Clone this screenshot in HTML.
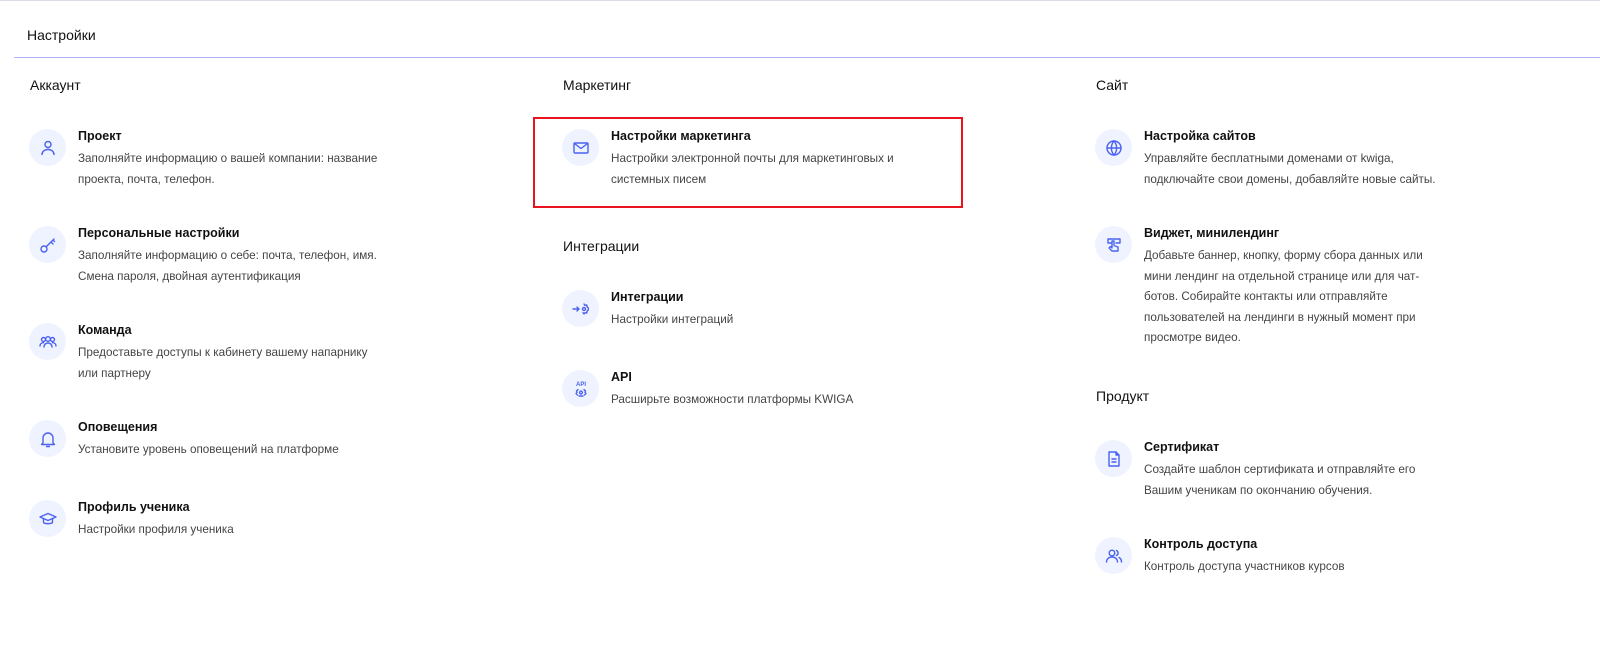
<!DOCTYPE html>
<html><head><meta charset="utf-8"><style>
*{margin:0;padding:0;box-sizing:border-box}
body{width:1600px;height:645px;background:#fff;font-family:"Liberation Sans",Arial,sans-serif;color:#111;position:relative;overflow:hidden}
.top{position:absolute;left:0;top:0;width:1600px;height:1px;background:#dcdce6}
.h1{position:absolute;left:27px;top:27px;font-size:14px}
.line{position:absolute;left:14px;right:0;top:57px;height:1px;background:#aab4ee}
.sec{position:absolute;font-size:14px}
.it{position:absolute;width:400px}
.ic{position:absolute;left:0;top:0;width:37px;height:37px;border-radius:50%;background:#eff3ff;display:flex;align-items:center;justify-content:center}
.ic svg{width:20px;height:20px;fill:none;stroke:#4a62ee;stroke-width:1.4;stroke-linecap:round;stroke-linejoin:round}
.t{position:absolute;left:49px;top:0;font-size:12.5px;font-weight:bold;white-space:nowrap}
.d{position:absolute;left:49px;top:20px;font-size:11.7px;line-height:20.5px;color:#444;width:306px}
.s .d{width:296px}
.box{position:absolute;left:533px;top:117px;width:430px;height:91px;border:2px solid #e8141e}
</style></head><body>
<div class="top"></div>
<div class="h1">Настройки</div>
<div class="line"></div>

<div class="sec" style="left:30px;top:77px">Аккаунт</div>
<div class="sec" style="left:563px;top:77px">Маркетинг</div>
<div class="sec" style="left:1096px;top:77px">Сайт</div>
<div class="sec" style="left:563px;top:238px">Интеграции</div>
<div class="sec" style="left:1096px;top:388px">Продукт</div>

<div class="it" style="left:29px;top:129px"><div class="ic"><svg viewBox="0 0 20 20"><circle cx="10" cy="6.5" r="3"/><path d="M4 16.5c0-3 2.7-5 6-5s6 2 6 5"/></svg></div><div class="t">Проект</div><div class="d">Заполняйте информацию о вашей компании: название проекта, почта, телефон.</div></div>

<div class="it" style="left:29px;top:226px"><div class="ic"><svg viewBox="0 0 20 20"><circle cx="6" cy="14" r="3"/><path d="M8.2 11.8L16 4M13 7l2 2M15 5l1.5 1.5"/></svg></div><div class="t">Персональные настройки</div><div class="d">Заполняйте информацию о себе: почта, телефон, имя. Смена пароля, двойная аутентификация</div></div>

<div class="it" style="left:29px;top:323px"><div class="ic"><svg viewBox="0 0 20 20"><circle cx="10" cy="7" r="2.3"/><circle cx="5.5" cy="7.5" r="2"/><circle cx="14.5" cy="7.5" r="2"/><path d="M6 15c0-2.5 1.8-4 4-4s4 1.5 4 4M2 14c0-2 1.5-3.3 3.5-3.3M18 14c0-2-1.5-3.3-3.5-3.3"/></svg></div><div class="t">Команда</div><div class="d">Предоставьте доступы к кабинету вашему напарнику<br>или партнеру</div></div>

<div class="it" style="left:29px;top:420px"><div class="ic"><svg viewBox="0 0 20 20"><path d="M5 14V9a5 5 0 0110 0v5l1.5 1.5h-13zM8.5 17.5h3"/></svg></div><div class="t">Оповещения</div><div class="d">Установите уровень оповещений на платформе</div></div>

<div class="it" style="left:29px;top:500px"><div class="ic"><svg viewBox="0 0 20 20"><path d="M2 8l8-3.5L18 8l-8 3.5zM5.5 9.7v3.8c0 1.5 9 1.5 9 0V9.7"/></svg></div><div class="t">Профиль ученика</div><div class="d">Настройки профиля ученика</div></div>

<div class="box"></div>
<div class="it s" style="left:562px;top:129px"><div class="ic"><svg viewBox="0 0 20 20"><rect x="3" y="5" width="14" height="10" rx="1"/><path d="M3.5 5.5L10 10.5l6.5-5"/></svg></div><div class="t">Настройки маркетинга</div><div class="d">Настройки электронной почты для маркетинговых и<br>системных писем</div></div>

<div class="it" style="left:562px;top:290px"><div class="ic"><svg viewBox="0 0 20 20"><path d="M2 10h6M6 8l2 2-2 2"/><circle cx="13" cy="10" r="1.5"/><path d="M13 5l1 1.3 1.7-.3.3 1.7L17.3 9v2l-1.3 1.3-.3 1.7-1.7-.3L13 15l-1-1.3"/></svg></div><div class="t">Интеграции</div><div class="d">Настройки интеграций</div></div>

<div class="it" style="left:562px;top:370px"><div class="ic"><svg viewBox="0 0 20 20"><text x="10" y="7" font-size="6" font-family="Liberation Sans" font-weight="bold" text-anchor="middle" fill="#4a62ee" stroke="none">API</text><circle cx="10" cy="13.5" r="1.4"/><path d="M7 10.5l-1.5 1.5.5 1.5-1 1 1.5 1.5M13 10.5l1.5 1.5-.5 1.5 1 1-1.5 1.5M8 17h4"/></svg></div><div class="t">API</div><div class="d">Расширьте возможности платформы KWIGA</div></div>

<div class="it s" style="left:1095px;top:129px"><div class="ic"><svg viewBox="0 0 20 20"><circle cx="10" cy="10" r="7"/><path d="M3 10h14M10 3c-3.5 4-3.5 10 0 14M10 3c3.5 4 3.5 10 0 14"/></svg></div><div class="t">Настройка сайтов</div><div class="d">Управляйте бесплатными доменами от kwiga,<br>подключайте свои домены, добавляйте новые сайты.</div></div>

<div class="it s" style="left:1095px;top:226px"><div class="ic"><svg viewBox="0 0 20 20"><path d="M4 4h12v4h-4M4 4v4h3M8 6v7l-1.5-1.5L5 13l3 3h6v-4l-4-1.5V6z"/></svg></div><div class="t">Виджет, минилендинг</div><div class="d">Добавьте баннер, кнопку, форму сбора данных или<br>мини лендинг на отдельной странице или для чат-<br>ботов. Собирайте контакты или отправляйте<br>пользователей на лендинги в нужный момент при<br>просмотре видео.</div></div>

<div class="it s" style="left:1095px;top:440px"><div class="ic"><svg viewBox="0 0 20 20"><path d="M5 3h7l3 3v11H5zM12 3v3h3M8 10h4M8 13h4"/></svg></div><div class="t">Сертификат</div><div class="d">Создайте шаблон сертификата и отправляйте его<br>Вашим ученикам по окончанию обучения.</div></div>

<div class="it s" style="left:1095px;top:537px"><div class="ic"><svg viewBox="0 0 20 20"><circle cx="8" cy="7" r="2.8"/><path d="M2.5 16c0-3 2.5-5 5.5-5s5.5 2 5.5 5M12.5 4.5a2.8 2.8 0 010 5M15 11.5c1.5.7 2.5 2.3 2.5 4.5"/></svg></div><div class="t">Контроль доступа</div><div class="d">Контроль доступа участников курсов</div></div>
</body></html>
